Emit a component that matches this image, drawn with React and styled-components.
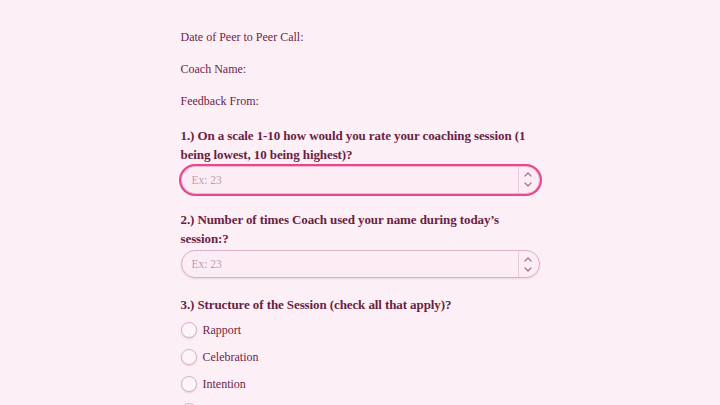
import styled, { createGlobalStyle } from "styled-components";

const GlobalStyle = createGlobalStyle`
  html, body {
    margin: 0;
    padding: 0;
    background: #fcf0f6;
  }
  body {
    font-family: "Liberation Serif", "DejaVu Serif", serif;
    color: #6e2448;
  }
`;

const Page = styled.div`
  width: 720px;
  height: 405px;
  overflow: hidden;
  display: flex;
  justify-content: center;
  align-items: flex-start;
`;

const Form = styled.form`
  width: 359px;
  padding-top: 27.5px;
  display: flex;
  flex-direction: column;
  flex-shrink: 0;
  & > * {
    flex-shrink: 0;
  }
`;

const InfoLine = styled.p`
  margin: 0 0 14px;
  font-size: 12px;
  line-height: 18px;
`;

const Question = styled.h3`
  margin: 2px 0 0;
  font-size: 13px;
  letter-spacing: -0.1px;
  font-weight: bold;
  line-height: 19px;
  color: #6a1f43;
`;

const Field = styled.div`
  display: flex;
  align-items: stretch;
  box-sizing: border-box;
  height: 28px;
  margin: 2px 0 14.5px;
  border: 1px solid ${(p) => (p.focused ? "#f3b7d1" : "#dcb0c7")};
  border-radius: 14px;
  background: #fcedf5;
  box-shadow: ${(p) =>
    p.focused ? "0 0 0 2px #e6488e" : "0 1px 2px rgba(150, 80, 110, 0.18)"};
  overflow: hidden;
`;

const NumberInput = styled.input`
  flex: 1;
  min-width: 0;
  border: none;
  background: transparent;
  padding: 0 10px;
  font-family: inherit;
  font-size: 11.5px;
  color: #6e2448;
  outline: none;
  &::placeholder {
    color: #c49bb0;
  }
`;

const Spinner = styled.div`
  width: 18px;
  border-left: 1px solid #e8cddb;
  display: flex;
  flex-direction: column;
  align-items: center;
  justify-content: center;
  gap: 5px;
  padding-right: 2px;
`;

const Options = styled.div`
  display: flex;
  flex-direction: column;
  gap: 11px;
  margin-top: 8.5px;
`;

const Option = styled.label`
  display: flex;
  align-items: center;
  gap: 6px;
  font-size: 12px;
  line-height: 16px;
`;

const Radio = styled.span`
  box-sizing: border-box;
  width: 16px;
  height: 16px;
  border-radius: 50%;
  border: 1px solid #d9b3c6;
  background: #fdf4f8;
  box-shadow: 0 1px 2px rgba(150, 80, 110, 0.2);
  flex-shrink: 0;
`;

function Chevron({ up }) {
  return (
    <svg width="8" height="5" viewBox="0 0 8 5" fill="none">
      <path
        d={up ? "M1 4L4 1L7 4" : "M1 1L4 4L7 1"}
        stroke="#b06a8e"
        strokeWidth="1.2"
        strokeLinecap="round"
        strokeLinejoin="round"
      />
    </svg>
  );
}

function NumberField({ focused }) {
  return (
    <Field focused={focused}>
      <NumberInput type="text" placeholder="Ex: 23" />
      <Spinner>
        <Chevron up />
        <Chevron />
      </Spinner>
    </Field>
  );
}

const structure = ["Rapport", "Celebration", "Intention", "Agenda"];

export default function App() {
  return (
    <Page>
      <GlobalStyle />
      <Form>
        <InfoLine>Date of Peer to Peer Call:</InfoLine>
        <InfoLine>Coach Name:</InfoLine>
        <InfoLine>Feedback From:</InfoLine>
        <Question>
          1.) On a scale 1-10 how would you rate your coaching session (1
          being lowest, 10 being highest)?
        </Question>
        <NumberField focused />
        <Question>
          2.) Number of times Coach used your name during today’s session:?
        </Question>
        <NumberField />
        <Question>3.) Structure of the Session (check all that apply)?</Question>
        <Options>
          {structure.map((item) => (
            <Option key={item}>
              <Radio />
              {item}
            </Option>
          ))}
        </Options>
      </Form>
    </Page>
  );
}
